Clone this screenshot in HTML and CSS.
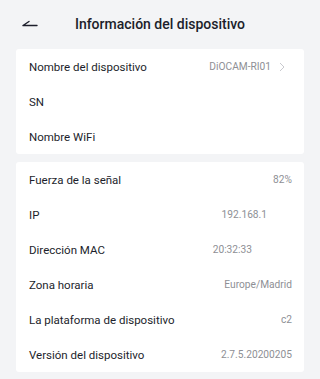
FILE: index.html
```html
<!DOCTYPE html>
<html lang="es">
<head>
<meta charset="utf-8">
<title>Información del dispositivo</title>
<link rel="stylesheet" href="styles.css">
</head>
<body>
<div class="page">
  <header class="topbar">
    <span class="back">
      <svg width="16" height="8" viewBox="0 0 16 8"><path d="M1 6.5 H15 M1 6.5 L7 2.5" fill="none" stroke="#1c1e2b" stroke-width="1.4" stroke-linecap="round"/></svg>
    </span>
    <h1 class="title">Información del dispositivo</h1>
  </header>
  <section class="card">
    <div class="row">
      <span class="label">Nombre del dispositivo</span>
      <span class="value">DiOCAM-RI01<svg class="chev" width="6" height="10" viewBox="0 0 6 10"><path d="M1 1 L5 5 L1 9" fill="none" stroke="#c8c9ce" stroke-width="1"/></svg></span>
    </div>
    <div class="row"><span class="label">SN</span></div>
    <div class="row"><span class="label">Nombre WiFi</span></div>
  </section>
  <section class="card">
    <div class="row"><span class="label">Fuerza de la señal</span><span class="value">82%</span></div>
    <div class="row"><span class="label">IP</span><span class="value value-ip">192.168.1</span></div>
    <div class="row"><span class="label">Dirección MAC</span><span class="value value-mac">20:32:33</span></div>
    <div class="row"><span class="label">Zona horaria</span><span class="value">Europe/Madrid</span></div>
    <div class="row"><span class="label">La plataforma de dispositivo</span><span class="value">c2</span></div>
    <div class="row"><span class="label">Versión del dispositivo</span><span class="value">2.7.5.20200205</span></div>
  </section>
</div>
</body>
</html>
```
FILE: styles.css
```css
html, body {
  margin: 0;
  padding: 0;
  background: #f3f4f6;
}
body {
  font-family: Roboto, "Liberation Sans", sans-serif;
  color: #1c1e2b;
}
.page {
  width: 320px;
  height: 379px;
  padding: 0 16px;
  box-sizing: border-box;
  display: flex;
  flex-direction: column;
  gap: 8px;
}
.topbar {
  height: 49px;
  display: flex;
  align-items: center;
  position: relative;
  margin-bottom: -8px;
}
.back {
  display: flex;
  margin-left: 6px;
  margin-top: -4px;
}
.title {
  position: absolute;
  left: 0;
  right: 0;
  top: 0;
  line-height: 48px;
  margin: 0;
  text-align: center;
  font-size: 14px;
  font-weight: 500;
  pointer-events: none;
}
.card {
  background: #ffffff;
  border-radius: 3px;
  display: flex;
  flex-direction: column;
}
.row {
  height: 35px;
  padding: 0 12px 0 13px;
  display: flex;
  align-items: center;
  justify-content: space-between;
}
.label {
  font-size: 11.5px;
}
.value {
  font-size: 10.2px;
  color: #8e8f95;
  display: flex;
  align-items: center;
}
.chev {
  margin-left: 8px;
  margin-right: 7px;
}
.value-ip {
  margin-right: 25px;
}
.value-mac {
  margin-right: 40px;
}
```
